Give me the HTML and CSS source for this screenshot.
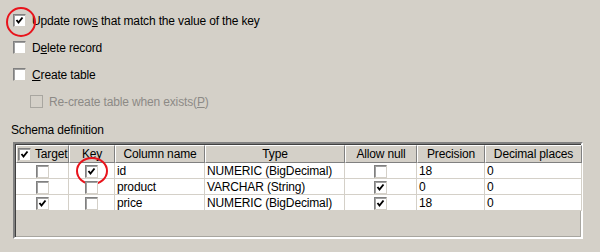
FILE: index.html
```html
<!DOCTYPE html>
<html>
<head>
<title>Table output settings</title>
<link rel="stylesheet" href="styles.css">
</head>
<body>
<div class="options">
  <div class="opt"><span class="box on mark"><svg viewBox="0 0 11 11"><polyline points="2.5,5 4.5,7.5 8.5,2.5"/></svg></span><span>Update row<u>s</u> that match the value of the key</span></div>
  <div class="opt"><span class="box"></span><span>D<u>e</u>lete record</span></div>
  <div class="opt"><span class="box"></span><span><u>C</u>reate table</span></div>
  <div class="opt sub off"><span class="box"></span><span>Re-create table when exists(<u>P</u>)</span></div>
</div>

<div class="section">Schema definition</div>

<div class="grid">
<table>
<colgroup>
  <col style="width: 53px">
  <col style="width: 46px">
  <col style="width: 90px">
  <col style="width: 140px">
  <col style="width: 72px">
  <col style="width: 68px">
  <col style="width: 97px">
</colgroup>
<tr>
  <th class="target"><span class="box on"><svg viewBox="0 0 11 11"><polyline points="2.5,5 4.5,7.5 8.5,2.5"/></svg></span>Target</th>
  <th>Key</th>
  <th>Column name</th>
  <th>Type</th>
  <th>Allow null</th>
  <th>Precision</th>
  <th>Decimal places</th>
</tr>
<tr>
  <td class="chk"><span class="box"></span></td>
  <td class="chk"><span class="box on mark wide"><svg viewBox="0 0 11 11"><polyline points="2.5,5 4.5,7.5 8.5,2.5"/></svg></span></td>
  <td>id</td>
  <td>NUMERIC (BigDecimal)</td>
  <td class="chk"><span class="box"></span></td>
  <td>18</td>
  <td>0</td>
</tr>
<tr>
  <td class="chk"><span class="box"></span></td>
  <td class="chk"><span class="box"></span></td>
  <td>product</td>
  <td>VARCHAR (String)</td>
  <td class="chk"><span class="box on"><svg viewBox="0 0 11 11"><polyline points="2.5,5 4.5,7.5 8.5,2.5"/></svg></span></td>
  <td>0</td>
  <td>0</td>
</tr>
<tr>
  <td class="chk"><span class="box on"><svg viewBox="0 0 11 11"><polyline points="2.5,5 4.5,7.5 8.5,2.5"/></svg></span></td>
  <td class="chk"><span class="box"></span></td>
  <td>price</td>
  <td>NUMERIC (BigDecimal)</td>
  <td class="chk"><span class="box on"><svg viewBox="0 0 11 11"><polyline points="2.5,5 4.5,7.5 8.5,2.5"/></svg></span></td>
  <td>18</td>
  <td>0</td>
</tr>
</table>
</div>
</body>
</html>
```

FILE: styles.css
```css
body { margin: 0; background: #d4d0c8; font-family: "Liberation Sans", Arial, sans-serif; font-size: 12px; letter-spacing: -0.15px; color: #000; }
u { text-decoration: underline; text-underline-offset: 1px; }

.options { padding: 7px 0 0 13px; }
.opt { display: flex; align-items: center; height: 27px; }
.opt .box { margin-right: 6px; }
.opt.sub { padding-left: 17px; }
.opt.off { color: #8c8a86; }
.opt.off .box { border-color: #a8a6a0; background: #d4d0c8; box-shadow: none; }

.box { position: relative; display: inline-flex; align-items: center; justify-content: center; box-sizing: border-box; width: 13px; height: 13px; background: #fff; border: 1px solid; border-color: #808080 #d4d0c8 #d4d0c8 #808080; box-shadow: inset 1px 1px 0 #a0a0a0; flex: none; }
.box svg { width: 11px; height: 11px; }
.box polyline { fill: none; stroke: #000; stroke-width: 1.9; }

.mark::after { content: ""; position: absolute; left: 50%; top: 50%; width: 26px; height: 26px; margin: -14px 0 0 -14px; border: 2px solid #e8141c; border-radius: 50%; }
.mark.wide::after { width: 28px; height: 24px; margin: -14px 0 0 -16px; }

.section { padding: 8px 0 0 11px; height: 19px; }

.grid { margin-left: 13px; width: 570px; height: 97px; box-sizing: border-box; border: 2px solid; border-color: #808080 #fff #fff #808080; box-shadow: inset 1px 1px 0 #404040, inset -1px -1px 0 #a8a6a0; padding: 1px 0 0 1px; }
table { border-collapse: separate; border-spacing: 0; table-layout: fixed; width: 566px; }
th { height: 18px; box-sizing: border-box; padding: 0 2px; font-weight: normal; text-align: center; background: #d4d0c8; border: 1px solid; border-color: #fff #808080 #808080 #fff; white-space: nowrap; overflow: hidden; }
th.target { text-align: left; padding-left: 1px; }
th.target .box { vertical-align: -2px; margin-right: 4px; }
td { height: 16px; box-sizing: border-box; padding: 0 2px; background: #fff; border-right: 1px solid #d4d0c8; border-bottom: 1px solid #d4d0c8; white-space: nowrap; overflow: hidden; }
td.chk { text-align: center; padding: 0; overflow: visible; }
td .box { vertical-align: middle; }
```
